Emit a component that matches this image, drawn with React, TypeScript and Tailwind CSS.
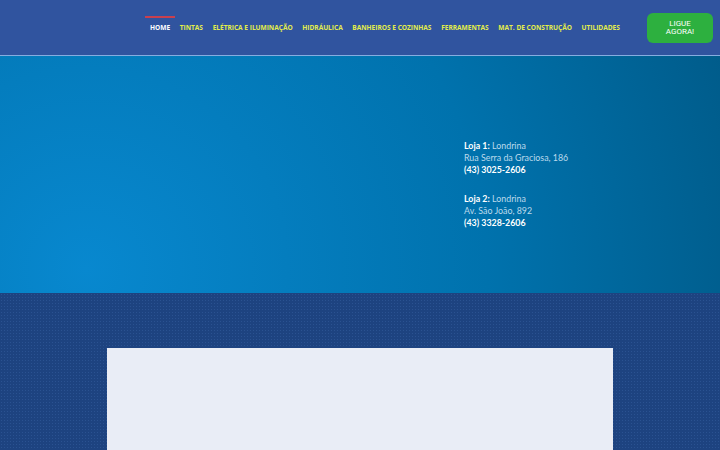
import React from 'react';

const links = ['TINTAS', 'ELÉTRICA E ILUMINAÇÃO', 'HIDRÁULICA', 'BANHEIROS E COZINHAS', 'FERRAMENTAS', 'MAT. DE CONSTRUÇÃO', 'UTILIDADES'];

const stores = [
  { label: 'Loja 1:', city: 'Londrina', street: 'Rua Serra da Graciosa, 186', phone: '(43) 3025-2606' },
  { label: 'Loja 2:', city: 'Londrina', street: 'Av. São João, 892', phone: '(43) 3328-2606' },
];

export default function App() {
  return (
    <div className="h-[450px] w-[720px] overflow-hidden font-['Lato',sans-serif]">
      {/* Header */}
      <header className="flex h-[56px] items-center border-b border-[#86ade0] bg-[#30549f] pl-[145px] pr-[7px]">
        <nav className="flex h-full flex-1 items-start gap-[9.7px] font-['Open_Sans',sans-serif] text-[6.55px] font-bold">
          <a className="mt-[16px] -mr-[5px] border-t-2 border-[#c8404f] px-[5px] pt-[4px] leading-[11px] text-white">HOME</a>
          {links.map((link) => (
            <a key={link} className="mt-[22px] leading-[11px] whitespace-nowrap text-[#e4ee4a]">{link}</a>
          ))}
        </nav>
        <button className="mt-[1px] flex h-[30px] w-[66px] shrink-0 items-center justify-center rounded-[6px] bg-[#2db03f] text-center font-['Roboto',sans-serif] text-[8px] leading-[8px] font-normal text-white">
          LIGUE<br />AGORA!
        </button>
      </header>

      {/* Lojas */}
      <section className="flex h-[237px] flex-col gap-[17px] bg-[radial-gradient(circle_at_12%_90%,#0888cf_0%,#0072ad_60%,#005c8b_100%)] pt-[84px] pl-[464px] text-[8.85px] leading-[12px] text-[#bcdaec]">
        {stores.map((store) => (
          <div key={store.label}>
            <p><b className="text-white">{store.label}</b> {store.city}</p>
            <p>{store.street}</p>
            <p className="font-bold text-white">{store.phone}</p>
          </div>
        ))}
      </section>

      {/* Conteudo */}
      <section className="flex h-[157px] justify-center bg-[#1d4380] bg-[radial-gradient(#2a5291_1px,transparent_1px)] bg-[size:3px_3px] pt-[55px]">
        <div className="h-full w-[506px] bg-[#e9edf6]" />
      </section>
    </div>
  );
}
